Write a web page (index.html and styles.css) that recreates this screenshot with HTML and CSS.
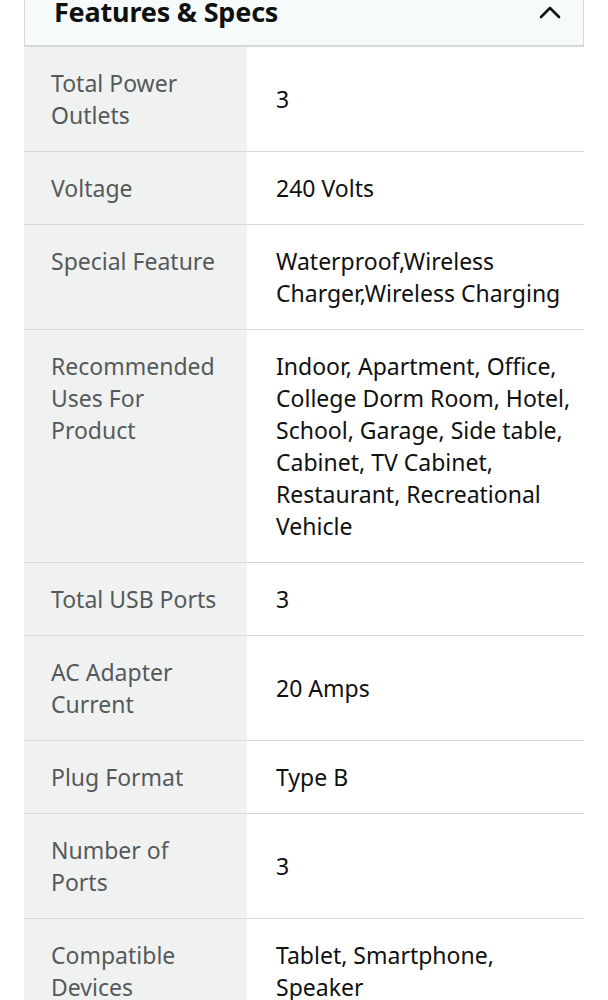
FILE: index.html
```html
<!DOCTYPE html>
<html>
<head>
<meta charset="utf-8">
<link rel="stylesheet" href="styles.css">
</head>
<body>
<div class="card">
  <div class="header">
    <span class="title">Features &amp; Specs</span>
    <svg class="chev" width="24" height="16" viewBox="0 0 24 16"><path d="M3 13 L12 4 L21 13" fill="none" stroke="#0f1111" stroke-width="2.6" stroke-linecap="round" stroke-linejoin="round"/></svg>
  </div>
  <div class="table">
    <div class="row"><div class="label">Total Power Outlets</div><div class="value">3</div></div>
    <div class="row"><div class="label">Voltage</div><div class="value">240 Volts</div></div>
    <div class="row"><div class="label">Special Feature</div><div class="value top">Waterproof,Wireless Charger,Wireless Charging</div></div>
    <div class="row"><div class="label">Recommended Uses For Product</div><div class="value top">Indoor, Apartment, Office, College Dorm Room, Hotel, School, Garage, Side table, Cabinet, TV Cabinet, Restaurant, Recreational Vehicle</div></div>
    <div class="row"><div class="label">Total USB Ports</div><div class="value">3</div></div>
    <div class="row"><div class="label">AC Adapter Current</div><div class="value">20 Amps</div></div>
    <div class="row"><div class="label">Plug Format</div><div class="value">Type B</div></div>
    <div class="row"><div class="label">Number of Ports</div><div class="value">3</div></div>
    <div class="row"><div class="label">Compatible Devices</div><div class="value top">Tablet, Smartphone, Speaker</div></div>
  </div>
</div>
</body>
</html>
```
FILE: styles.css
```css
html, body {
  margin: 0;
  padding: 0;
  background: #ffffff;
}
body {
  font-family: "Noto Sans", "Liberation Sans", sans-serif;
  color: #0f1111;
}
.card {
  margin: -22px 24px 0 24px;
}
.header {
  display: flex;
  align-items: center;
  justify-content: space-between;
  background: #f7fafa;
  border: 1px solid #d5d9d9;
  border-top: none;
  height: 69px;
  box-sizing: border-box;
  padding: 0 21px 0 29px;
  border-bottom: 2px solid #d5d9d9;
}
.title {
  font-size: 27px;
  line-height: 32px;
  font-weight: 700;
  color: #0f1111;
  letter-spacing: -0.2px;
}
.chev {
  display: block;
}
.row {
  display: grid;
  grid-template-columns: 223px 1fr;
  border-bottom: 1px solid #d5d9d9;
}
.label {
  background: #f0f2f2;
  color: #565959;
  font-size: 23px;
  line-height: 32px;
  padding: 20px 20px 20px 27px;
}
.value {
  color: #0f1111;
  font-size: 23px;
  line-height: 32px;
  padding: 20px 11px 20px 29px;
  display: flex;
  align-items: center;
}
.value.top {
  align-items: flex-start;
}
```
